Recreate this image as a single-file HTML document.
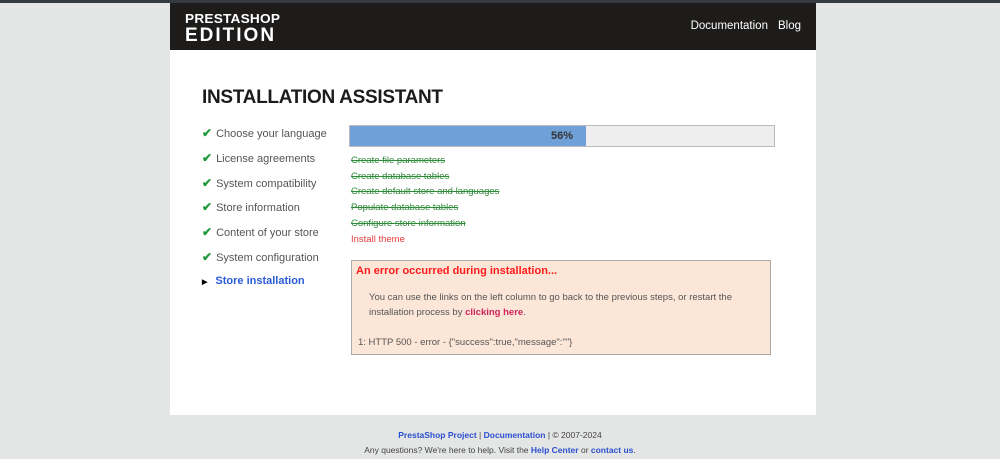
<!DOCTYPE html>
<html><head><style>
body{margin:0;width:1000px;height:459px;background:#e4e5e5;font-family:"Liberation Sans",sans-serif;position:relative;overflow:hidden}
.top{position:absolute;left:0;top:0;width:1000px;height:3px;background:#353b41}
.hdr{position:absolute;left:170px;top:3px;width:646px;height:47px;background:#1d1c1b}
.logo{position:absolute;left:15px;top:9px;color:#fff;font-weight:900;line-height:1}
.logo .a{font-size:13px;letter-spacing:0.2px;transform:scaleX(1.05);transform-origin:left}
.logo .b{font-size:19px;letter-spacing:2px;margin-top:1px}
.nav{position:absolute;right:15px;top:17px;color:#fff;font-size:11.5px}
.nav span{margin-left:10px}
.main{position:absolute;left:170px;top:50px;width:646px;height:365px;background:#fff}
h1{position:absolute;left:32px;top:37px;margin:0;font-size:19px;font-weight:900;color:#1d1c1b;letter-spacing:-0.3px}
.steps{position:absolute;left:32px;top:76px;font-size:11px;color:#555}
.steps div{height:24.8px}
.steps b{color:#1f9a3c;margin-right:4px;font-size:12px}
.steps .cur{color:#2a5bd7;font-weight:bold}
.bar{position:absolute;left:179px;top:75px;width:424px;height:20px;background:#eeeeee;border:1px solid #bbb}
.fill{width:236px;height:20px;background:#6fa0d8;text-align:right;font-size:11px;font-weight:bold;color:#333;line-height:20px;box-sizing:border-box;padding-right:13px}
.tasks{position:absolute;left:181px;top:103px;font-size:9.5px;line-height:15.7px}
.tasks .d{color:#2f8a3a;text-decoration:line-through}
.tasks .e{color:#e53b3b}
.err{position:absolute;left:181px;top:210px;width:418px;height:93px;background:#fbe6d8;border:1px solid #aaa;font-size:9.5px;color:#555}
.err .t{position:absolute;left:4px;top:4px;color:#ff1a1a;font-weight:bold;font-size:11px}
.err .m{position:absolute;left:17px;top:30px;width:380px;line-height:14.5px}
.err .m b{color:#d0245a}
.err .c{position:absolute;left:6px;top:76px}
.foot{position:absolute;top:428px;left:0;width:1000px;text-align:center;font-size:8.5px;color:#444;line-height:15px}
.foot b{color:#2a4fd0}
</style></head><body>
<div class="top"></div>
<div class="hdr"><div class="logo"><div class="a">PRESTASHOP</div><div class="b">EDITION</div></div>
<div class="nav"><span>Documentation</span><span>Blog</span></div></div>
<div class="main">
<h1>INSTALLATION ASSISTANT</h1>
<div class="steps">
<div><b>✔</b>Choose your language</div>
<div><b>✔</b>License agreements</div>
<div><b>✔</b>System compatibility</div>
<div><b>✔</b>Store information</div>
<div><b>✔</b>Content of your store</div>
<div><b>✔</b>System configuration</div>
<div class="cur"><span style="color:#000;font-size:7px;margin-right:8px">▶</span>Store installation</div>
</div>
<div class="bar"><div class="fill">56%</div></div>
<div class="tasks">
<div class="d">Create file parameters</div>
<div class="d">Create database tables</div>
<div class="d">Create default store and languages</div>
<div class="d">Populate database tables</div>
<div class="d">Configure store information</div>
<div class="e">Install theme</div>
</div>
<div class="err"><div class="t">An error occurred during installation...</div>
<div class="m">You can use the links on the left column to go back to the previous steps, or restart the installation process by <b>clicking here</b>.</div>
<div class="c">1: HTTP 500 - error - {"success":true,"message":""}</div></div>
</div>
<div class="foot"><b>PrestaShop Project</b> | <b>Documentation</b> | © 2007-2024<br>Any questions? We're here to help. Visit the <b>Help Center</b> or <b>contact us</b>.</div>
</body></html>
